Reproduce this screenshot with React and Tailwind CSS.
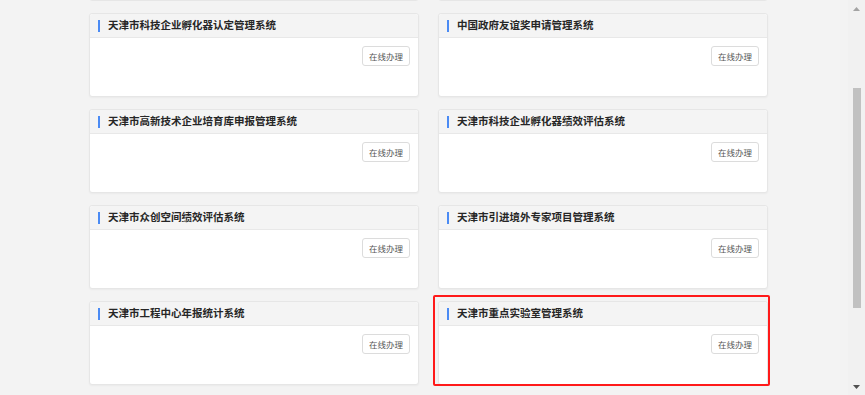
import React from 'react';

const rows = [
  ['天津市科技企业孵化器认定管理系统', '中国政府友谊奖申请管理系统'],
  ['天津市高新技术企业培育库申报管理系统', '天津市科技企业孵化器绩效评估系统'],
  ['天津市众创空间绩效评估系统', '天津市引进境外专家项目管理系统'],
  ['天津市工程中心年报统计系统', '天津市重点实验室管理系统'],
];

function SystemCard({ title, marked }) {
  return (
    <div className="relative w-[330px] h-[84px] bg-white border border-[#e6e6e6] rounded-[3px] shadow-[0_1px_2px_rgba(0,0,0,0.04)] flex flex-col">
      <div className="h-[24px] shrink-0 bg-[#f4f4f4] border-b border-[#e8e8e8] rounded-t-[3px] flex items-center pl-[8px]">
        <span className="w-[2px] h-[12px] bg-[#4b8bf4] mr-[8px]" />
        <span className="text-[10.5px] font-bold text-[#262626] leading-none">{title}</span>
      </div>
      <div className="flex-1 flex justify-end items-start pt-[8px] pr-[8px]">
        <button className="w-[48px] h-[20px] border border-[#dcdcdc] rounded-[3px] bg-white text-[8.5px] text-[#555] leading-none">
          在线办理
        </button>
      </div>
      {marked && (
        <div className="absolute -left-[6px] -right-[3px] -top-[7px] -bottom-[2px] border-2 border-[#ff1a1a] rounded-[2px] pointer-events-none" />
      )}
    </div>
  );
}

export default function App() {
  return (
    <div
      className="w-[865px] h-[395px] bg-[#f3f3f3] flex overflow-hidden"
      style={{ fontFamily: '"Noto Sans CJK SC", "Noto Sans", sans-serif' }}
    >
      <div className="flex-1 overflow-hidden">
        <div className="-mt-[11px] pl-[89px] flex flex-col gap-[12px]">
          <div className="flex gap-[19px]">
            <div className="w-[330px] h-[12px] bg-white border border-[#e6e6e6] rounded-[3px]" />
            <div className="w-[330px] h-[12px] bg-white border border-[#e6e6e6] rounded-[3px]" />
          </div>
          {rows.map((row, i) => (
            <div key={i} className="flex gap-[19px]">
              <SystemCard title={row[0]} />
              <SystemCard title={row[1]} marked={i === rows.length - 1} />
            </div>
          ))}
        </div>
      </div>
      <div className="w-[17px] shrink-0 bg-[#f1f1f1] flex flex-col items-center">
        <div className="h-[17px] flex items-center justify-center">
          <svg width="7" height="4" viewBox="0 0 7 4"><path d="M0 4 L3.5 0 L7 4 Z" fill="#a3a3a3" /></svg>
        </div>
        <div className="mt-[71px] w-[8px] h-[220px] bg-[#c1c1c1]" />
        <div className="flex-1" />
        <div className="h-[17px] flex items-center justify-center">
          <svg width="7" height="4" viewBox="0 0 7 4"><path d="M0 0 L7 0 L3.5 4 Z" fill="#505050" /></svg>
        </div>
      </div>
    </div>
  );
}
